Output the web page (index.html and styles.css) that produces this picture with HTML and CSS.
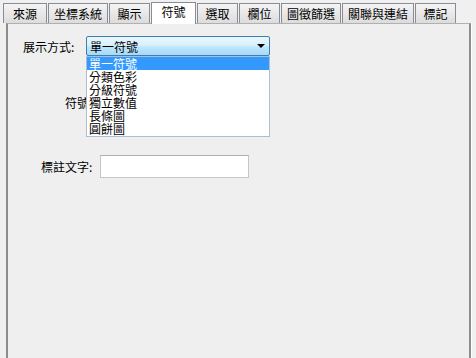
FILE: index.html
```html
<!DOCTYPE html>
<html lang="zh-Hant">
<head>
  <meta charset="UTF-8">
  <title>圖層屬性</title>
  <link rel="stylesheet" href="styles.css">
</head>
<body>
  <div class="tabs">
    <div class="tab">來源</div>
    <div class="tab">坐標系統</div>
    <div class="tab">顯示</div>
    <div class="tab active">符號</div>
    <div class="tab">選取</div>
    <div class="tab">欄位</div>
    <div class="tab">圖徵篩選</div>
    <div class="tab">關聯與連結</div>
    <div class="tab">標記</div>
  </div>
  <div class="panel">
    <div class="row mode-row">
      <span class="label mode-label">展示方式:</span>
      <div class="combo-wrap">
        <div class="combo">
          <span>單一符號</span>
          <span class="arrow"></span>
        </div>
        <ul class="list">
          <li class="selected">單一符號</li>
          <li>分類色彩</li>
          <li>分級符號</li>
          <li>獨立數值</li>
          <li>長條圖</li>
          <li>圓餅圖</li>
        </ul>
      </div>
    </div>
    <div class="row symbol-row">
      <span class="label">符號:</span>
    </div>
    <div class="row note-row">
      <span class="label">標註文字:</span>
      <input class="text-input" type="text">
    </div>
  </div>
</body>
</html>
```

FILE: styles.css
```css
*{
  margin:0;
  padding:0;
  box-sizing:border-box;
}
body{
  background-color:#f0f0f0;
  font-family:"Noto Sans CJK TC","Noto Sans",sans-serif;
  font-size:12px;
  color:#000;
  height:358px;
  overflow:hidden;
}
.tabs{
  display:flex;
  padding:2px 0 0 3px;
  height:24px;
  align-items:flex-end;
  position:relative;
  z-index:1;
}
.tab{
  height:20px;
  min-width:41px;
  padding:0 5px;
  margin-right:1px;
  margin-bottom:1px;
  border:1px solid #898c95;
  border-bottom:none;
  background:linear-gradient(#f4f4f4,#dcdcdc);
  display:flex;
  align-items:center;
  justify-content:center;
  line-height:12px;
}
.tab:first-child{
  min-width:44px;
}
.tab.active{
  height:22px;
  margin-bottom:0;
  min-width:45px;
  background:#fff;
  padding-bottom:3px;
}
.panel{
  margin:-1px 5px 0 6px;
  height:400px;
  border:1px solid #b0b0b0;
  border-left:2px solid #8c8c8c;
  border-right:2px solid #8c8c8c;
  box-shadow:1px 0 0 #fff;
  background-color:#efefef;
  padding-top:12px;
}
.row{
  display:flex;
  align-items:center;
}
.label{
  flex:none;
}
.mode-label{
  margin-left:15px;
  width:63px;
}
.combo-wrap{
  position:relative;
  flex:none;
  width:184px;
}
.combo{
  width:184px;
  height:20px;
  border:1px solid #3c7fb1;
  border-radius:2px;
  background:linear-gradient(#eaf6fd 0%,#d9f0fc 45%,#bee6fd 55%,#a7d9f5 100%);
  display:flex;
  align-items:center;
  justify-content:space-between;
  padding:0 4px 0 3px;
}
.arrow{
  width:0;
  height:0;
  border-left:4px solid transparent;
  border-right:4px solid transparent;
  border-top:4px solid #000;
}
.list{
  position:absolute;
  top:20px;
  left:0;
  width:184px;
  list-style:none;
  background:#fff;
  border:1px solid #a9bfd6;
  z-index:2;
  padding-bottom:1px;
}
.list li{
  height:13px;
  line-height:13px;
  padding-left:2px;
}
.list li.selected{
  background-color:#3399ff;
  color:#fff;
}
.symbol-row{
  margin-top:38px;
}
.symbol-row .label{
  margin-left:57px;
}
.note-row{
  margin-top:44px;
}
.note-row .label{
  margin-left:33px;
  margin-right:8px;
}
.text-input{
  width:149px;
  height:23px;
  border:1px solid #c6c6c6;
  border-top-color:#abadb3;
  background:#fff;
  outline:none;
}
```
